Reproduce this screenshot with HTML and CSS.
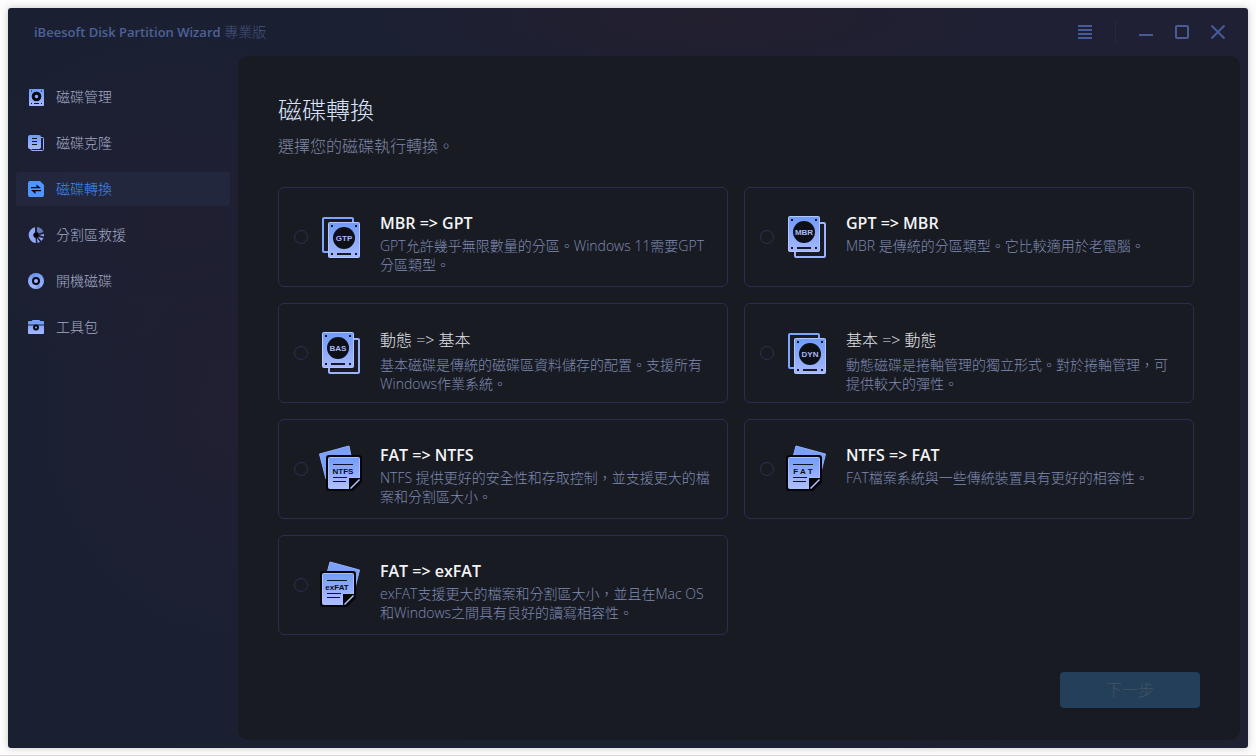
FILE: index.html
```html
<!DOCTYPE html>
<html lang="zh-Hant">
<head>
<meta charset="utf-8">
<title>iBeesoft Disk Partition Wizard</title>
<link rel="stylesheet" href="styles.css">
</head>
<body>
<svg class="defs" aria-hidden="true">
  <defs>
    <linearGradient id="ice" x1="0" y1="0" x2="0" y2="1"><stop offset="0" stop-color="#6f9bf8"/><stop offset="1" stop-color="#a6b8ff"/></linearGradient>
    <linearGradient id="sheet" x1="0" y1="0" x2="0" y2="1"><stop offset="0" stop-color="#729cfa"/><stop offset="1" stop-color="#b0beff"/></linearGradient>
    <symbol id="disk-front" viewBox="0 0 32 36">
      <rect x="0.500" y="0.500" width="31" height="35" rx="1" fill="url(#ice)" stroke="#b4c6ff"/>
      <path d="M3 3h2v2H3zM27 3h2v2h-2zM3 31h2v2H3zM27 31h2v2h-2zM9 31h14v2H9z" fill="#171a24"/>
      <circle cx="16" cy="16" r="11" fill="#0e1018"/>
    </symbol>
    <symbol id="page" viewBox="0 0 36 36">
      <path d="M3 0H33Q36 0 36 3V27L27 36H3Q0 36 0 33V3Q0 0 3 0Z" fill="#05060b"/>
      <path d="M3.500 2.500H32.500Q33.500 2.500 33.500 3.500V23H23V33.500H3.500Q2.500 33.500 2.500 32.500V3.500Q2.500 2.500 3.500 2.500Z" fill="url(#sheet)" stroke="#a9bdff"/>
      <path d="M23 34V23H34V25L25 34Z" fill="#05060b"/>
      <path d="M24.500 33.500 33.500 24.500" stroke="#b6c5ff" stroke-width="1.500"/>
      <path d="M7 9.500H27M7 22.500H21M7 26.500H20" stroke="#111425"/>
    </symbol>
  </defs>
</svg>
<div class="window">
  <header class="titlebar">
    <div class="app-name"><strong>iBeesoft Disk Partition Wizard</strong> 專業版</div>
    <div class="controls">
      <button type="button" aria-label="選單"><svg width="14" height="14" viewBox="0 0 14 14"><path d="M0 1h14M0 5h14M0 9h14M0 13h14"/></svg></button>
      <span class="divider"></span>
      <button type="button" aria-label="最小化"><svg width="14" height="14" viewBox="0 0 14 14"><path d="M0 10h14"/></svg></button>
      <button type="button" aria-label="最大化"><svg width="14" height="14" viewBox="0 0 14 14"><rect x="1" y="1" width="12" height="12" rx="1"/></svg></button>
      <button type="button" aria-label="關閉"><svg width="14" height="14" viewBox="0 0 14 14"><path d="m0.500 0.500 13 13M13.500 0.500l-13 13"/></svg></button>
    </div>
  </header>
  <nav class="sidebar">
    <a href="#manage"><svg viewBox="0 0 16 16"><rect x="1" width="15" height="17" rx="1" fill="url(#ice)"/><circle cx="8.500" cy="7.500" r="3.300" fill="none" stroke="#05070d" stroke-width="3"/><path d="M3 1.500h1v1H3zM13 1.500h1v1h-1zM3 14h1v1H3zM13 14h1v1h-1zM6 14h5v1H6z" fill="#10131e"/></svg>磁碟管理</a>
    <a href="#clone"><svg viewBox="0 0 16 16"><path d="M13 2.500h1.500q1 0 1 1v11q0 1-1 1H4q-1 0-1-1V13" fill="none" stroke="#9bb0fc"/><rect width="13" height="14" rx="2" fill="url(#ice)"/><path d="M4 3.500h5M4 6.500h5M4 9.500h5" stroke="#10131e"/></svg>磁碟克隆</a>
    <a class="active" href="#convert" aria-current="page"><svg viewBox="0 0 16 16"><path d="M2 0h10l4 4v10q0 2-2 2H2q-2 0-2-2V2q0-2 2-2Z" fill="#4f94ff"/><path d="M3 6h5.500V3.500L13 7.200H3ZM13 10.200H7.500V13L3 9H13Z" fill="#05070d"/></svg>磁碟轉換</a>
    <a href="#rescue"><svg viewBox="0 0 16 16"><path d="M7 0.200A8 8 0 0 0 8 16L7.500 11A3 3 0 0 1 7 5.500Z" fill="#91a8f8"/><path d="M9 0A8 8 0 0 1 15.500 5L11 6.500 9 4.800Z" fill="#6579b4"/><path d="M16 7v2.500L11 8ZM15.500 11 13.500 14 10 10ZM12 15 9.500 16 9 11Z" fill="#91a8f8"/><circle cx="8" cy="8" r="2.500" fill="#05070d"/></svg>分割區救援</a>
    <a href="#boot"><svg viewBox="0 0 16 16"><circle cx="8" cy="8" r="8" fill="url(#ice)"/><path d="M8 8 2.500 2.500A8 8 0 0 1 8 0ZM8 8 13.500 13.500A8 8 0 0 1 8 16Z" fill="#6e8fe8" opacity=".6"/><circle cx="8" cy="8" r="3" fill="#a4b8ff" stroke="#080a12" stroke-width="2"/></svg>開機磁碟</a>
    <a href="#tools"><svg viewBox="0 0 16 16"><path d="M4.500 3V1.500h7V3" fill="none" stroke="#8aa6fa"/><path d="M1 2h14q1 0 1 1v2.500H0V3q0-1 1-1ZM0 6.500h16V14q0 1-1 1H1q-1 0-1-1Z" fill="url(#ice)"/><circle cx="8" cy="8.500" r="2" fill="#91a8f8" stroke="#080a12" stroke-width="2"/></svg>工具包</a>
  </nav>
  <main class="panel">
    <h1>磁碟轉換</h1>
    <p class="subtitle">選擇您的磁碟執行轉換。</p>
    <form class="form">
      <div class="options">
        <label class="card"><input type="radio" name="conversion"><svg class="art" viewBox="0 0 48 48"><rect x="5" y="5" width="30" height="34" rx="1" fill="none" stroke="#7da4ff" stroke-width="2"/><use href="#disk-front" x="10" y="9" width="32" height="36"/><text x="26" y="28">GTP</text></svg><span class="copy"><b>MBR =&gt; GPT</b><span>GPT允許幾乎無限數量的分區。Windows 11需要GPT分區類型。</span></span></label>
        <label class="card"><input type="radio" name="conversion"><svg class="art" viewBox="0 0 48 48"><rect x="11" y="10" width="30" height="34" rx="1" fill="none" stroke="#9bb2ff" stroke-width="2"/><use href="#disk-front" x="4" y="3" width="32" height="36"/><text x="20" y="22">MBR</text></svg><span class="copy"><b>GPT =&gt; MBR</b><span>MBR 是傳統的分區類型。它比較適用於老電腦。</span></span></label>
        <label class="card"><input type="radio" name="conversion"><svg class="art" viewBox="0 0 48 48"><rect x="11" y="10" width="30" height="34" rx="1" fill="none" stroke="#9bb2ff" stroke-width="2"/><use href="#disk-front" x="4" y="3" width="32" height="36"/><text x="20" y="22">BAS</text></svg><span class="copy"><b class="han">動態 =&gt; 基本</b><span>基本磁碟是傳統的磁碟區資料儲存的配置。支援所有Windows作業系統。</span></span></label>
        <label class="card"><input type="radio" name="conversion"><svg class="art" viewBox="0 0 48 48"><rect x="5" y="5" width="30" height="34" rx="1" fill="none" stroke="#7da4ff" stroke-width="2"/><use href="#disk-front" x="10" y="9" width="32" height="36"/><text x="26" y="28">DYN</text></svg><span class="copy"><b class="han">基本 =&gt; 動態</b><span>動態磁碟是捲軸管理的獨立形式。對於捲軸管理，可提供較大的彈性。</span></span></label>
        <label class="card"><input type="radio" name="conversion"><svg class="art ink" viewBox="0 0 48 48"><path d="M1.500 9 31 1 36 26 8 34Z" fill="#7ba0fa" stroke="#92b1ff" stroke-linejoin="round"/><use href="#page" x="8" y="10" width="36" height="36"/><text x="25" y="29">NTFS</text></svg><span class="copy"><b>FAT =&gt; NTFS</b><span>NTFS 提供更好的安全性和存取控制，並支援更大的檔案和分割區大小。</span></span></label>
        <label class="card"><input type="radio" name="conversion"><svg class="art ink" viewBox="0 0 48 48"><path d="M12 1 41.500 9 35 35 5 27Z" fill="#7ba0fa" stroke="#92b1ff" stroke-linejoin="round"/><use href="#page" x="2" y="10" width="36" height="36"/><text x="19" y="29">F A T</text></svg><span class="copy"><b>NTFS =&gt; FAT</b><span>FAT檔案系統與一些傳統裝置具有更好的相容性。</span></span></label>
        <label class="card"><input type="radio" name="conversion"><svg class="art ink" viewBox="0 0 48 48"><path d="M12 1 41.500 9 35 35 5 27Z" fill="#7ba0fa" stroke="#92b1ff" stroke-linejoin="round"/><use href="#page" x="2" y="10" width="36" height="36"/><text x="19" y="29">exFAT</text></svg><span class="copy"><b>FAT =&gt; exFAT</b><span>exFAT支援更大的檔案和分割區大小，並且在Mac OS和Windows之間具有良好的讀寫相容性。</span></span></label>
      </div>
      <button class="next" type="submit" disabled>下一步</button>
    </form>
  </main>
</div>
</body>
</html>
```
FILE: styles.css
```css
* { box-sizing: border-box; }

body {
  margin: 0;
  min-height: 100vh;
  padding: 8px 8px 7px;
  display: flex;
  background: #fcfcfc;
  border-bottom: 1px solid #d9d7d4;
  font: 300 14px/20px "Open Sans", "Noto Sans CJK TC", sans-serif;
  color: #7d86a8;
}

.defs { position: absolute; width: 0; height: 0; }

.window {
  flex: 1;
  display: grid;
  grid-template: 48px 1fr / 230px 1fr;
  padding: 0 8px 8px 0;
  border-radius: 3px;
  background:
    radial-gradient(ellipse 200px 240px at 225px 400px, #221f32, transparent),
    radial-gradient(ellipse 240px 180px at 170px 200px, #201f32, transparent),
    radial-gradient(ellipse 360px 80px at 700px 10px, #231f2f, transparent),
    linear-gradient(90deg, #1a2032, #1b2033 50%, #202034);
  box-shadow: 0 0 7px #00000038;
}

.titlebar {
  grid-column: 1 / -1;
  display: flex;
  align-items: center;
  justify-content: space-between;
  padding: 0 4px 0 26px;
}

.app-name { color: #435382; }
.app-name strong { font-size: 13px; font-weight: 600; color: #4d619a; }

.controls { display: flex; align-items: center; }
.controls button {
  display: grid;
  place-items: center;
  width: 36px;
  height: 32px;
  padding: 0;
  border: 0;
  background: none;
}
.controls svg { fill: none; stroke: #475b98; stroke-width: 2; }
.divider { width: 1px; height: 24px; margin: 0 12px; background: #29283c; }

.sidebar {
  display: flex;
  flex-direction: column;
  gap: 12px;
  padding: 24px 8px;
}
.sidebar a {
  display: flex;
  align-items: center;
  gap: 12px;
  height: 34px;
  padding: 0 12px;
  border-radius: 3px;
  color: #a2abc6;
  text-decoration: none;
}
.sidebar svg { width: 16px; height: 16px; overflow: visible; }
.sidebar .active { background: #22273e; color: #4187f0; }

.panel {
  display: flex;
  flex-direction: column;
  padding: 36px 40px 32px;
  border-radius: 10px;
  background: #191b23;
}
h1 { margin: 0; font-size: 24px; line-height: 36px; font-weight: 300; color: #d8e2fa; }
.subtitle { margin: 6px 0 29px; font-size: 16px; line-height: 24px; color: #7d86a6; }

.form { flex: 1; display: flex; flex-direction: column; }
.options {
  display: grid;
  grid-template-columns: 1fr 1fr;
  gap: 16px;
  padding-right: 6px;
  margin-bottom: 24px;
}
.card {
  display: flex;
  align-items: flex-start;
  min-height: 100px;
  padding: 0 15px;
  border: 1px solid #292e50;
  border-radius: 6px;
}
.card input {
  appearance: none;
  flex: none;
  align-self: center;
  width: 14px;
  height: 14px;
  margin: 0;
  border: 1px solid #2c3050;
  border-radius: 50%;
}
.art { flex: none; width: 48px; height: 48px; margin: 25px 14px 0 10px; }
.art text {
  font: 700 8px "Liberation Sans", Arial, sans-serif;
  text-anchor: middle;
  fill: #a9b9f5;
}
.art.ink text { fill: #0a0d1b; }

.copy { padding-top: 24px; line-height: 19px; color: #7f8bb4; }
.copy b { display: block; margin-bottom: 2px; font-size: 16px; line-height: 22px; font-weight: 600; color: #f3f4f6; }
.copy b.han { line-height: 25px; font-weight: 300; color: #e0e2e6; }

.next {
  align-self: flex-end;
  width: 140px;
  height: 36px;
  margin-top: auto;
  padding: 0;
  border: 0;
  border-radius: 4px;
  background: #233f5a;
  color: #465362;
  font: inherit;
  font-size: 16px;
}
```
